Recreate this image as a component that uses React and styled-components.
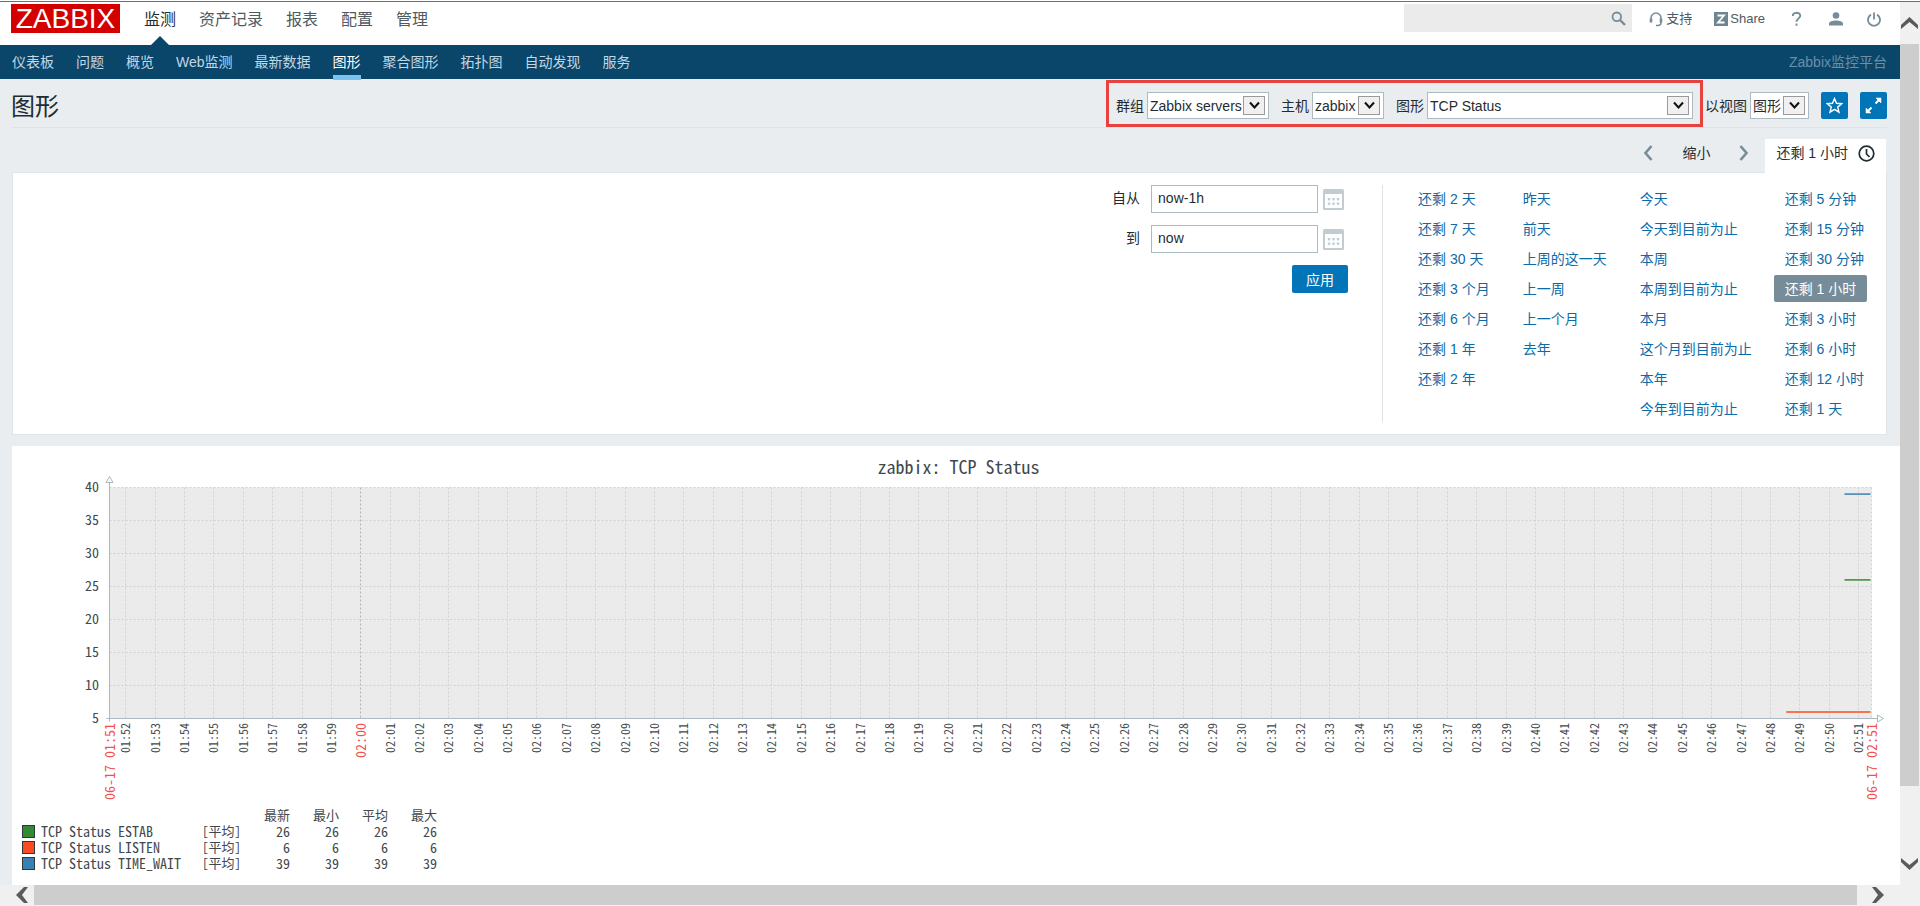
import React, { useLayoutEffect, useRef, useState } from "react";
import styled, { createGlobalStyle } from "styled-components";

const GlobalStyle = createGlobalStyle`
  * { box-sizing: border-box; }
  body {
    margin: 0;
    background: #e9edef;
    color: #1f2c33;
    font-family: "Liberation Sans", "Noto Sans CJK SC", sans-serif;
    font-size: 14px;
    line-height: 20px;
  }
  button, input, select { font: inherit; color: inherit; margin: 0; }
  a { text-decoration: none; color: inherit; }
`;

const Window = styled.div`
  display: grid;
  grid-template-columns: minmax(0, 1fr) 20px;
  grid-template-rows: minmax(0, 1fr) 21px;
  min-height: 100vh;
  border-top: 1px solid #fff;
`;

const Page = styled.div`
  display: flex;
  flex-direction: column;
  border-top: 1px solid #6b706f;
`;

const TopBar = styled.header`
  display: flex;
  align-items: flex-start;
  height: 43px;
  padding: 2px 13px 0 11px;
  background: #fff;
`;

const Logo = styled.a`
  width: 109px;
  height: 29px;
  margin-right: 24px;
  background: #d40000;
  color: #fff;
  font-size: 28px;
  line-height: 30px;
  text-align: center;
`;

const MainNav = styled.nav`
  display: flex;
  gap: 23px;
  flex: 1;
`;

const MainLink = styled.a`
  position: relative;
  height: 41px;
  font-size: 16px;
  line-height: 32px;
  color: ${(p) => (p.$active ? "#1f2c33" : "#4f5a61")};
  ${(p) =>
    p.$active &&
    `&::after {
      content: "";
      position: absolute;
      left: 50%;
      bottom: 0;
      margin-left: -9px;
      border: 9px solid transparent;
      border-top: 0;
      border-bottom-color: #0a466a;
    }`}
`;

const SearchBox = styled.form`
  display: flex;
  align-items: center;
  width: 228px;
  height: 28px;
  margin-right: 17px;
  padding-right: 6px;
  background: #ebebeb;
`;

const SearchInput = styled.input`
  flex: 1;
  min-width: 0;
  height: 28px;
  padding: 0 8px;
  border: 0;
  outline: 0;
  background: transparent;
`;

const IconButton = styled.button`
  display: flex;
  align-items: center;
  justify-content: ${(p) => p.$align || "center"};
  padding: 0;
  border: 0;
  background: none;
  color: #768d99;
`;

const Tools = styled.div`
  display: flex;
  align-items: center;
  height: 30px;
  color: #4f5a61;
  font-size: 13px;
`;

const ToolLink = styled.a`
  display: flex;
  align-items: center;
  gap: ${(p) => p.$gap || 0}px;
  margin-right: ${(p) => p.$after || 0}px;
`;

const SubBar = styled.div`
  display: flex;
  justify-content: space-between;
  height: 34px;
  padding: 0 13px 0 12px;
  background: #0a466a;
  line-height: 34px;
`;

const SubNav = styled.nav`
  display: flex;
  gap: 22px;
`;

const SubLink = styled.a`
  height: 35px;
  color: ${(p) => (p.$active ? "#fff" : "#c3d6e3")};
  border-bottom: 5px solid ${(p) => (p.$active ? "#7ac2f0" : "transparent")};
`;

const ServerName = styled.span`
  color: #6a8fa8;
`;

const TitleBar = styled.div`
  display: flex;
  align-items: center;
  justify-content: space-between;
  height: 49px;
  margin: 0 13px 0 11px;
  padding-top: 1px;
  border-bottom: 1px solid #dfe4e7;
`;

const Title = styled.h1`
  margin: 0;
  padding-top: 7px;
  font-size: 24px;
  line-height: 32px;
  font-weight: 400;
`;

const Controls = styled.div`
  display: flex;
  align-items: center;
`;

const Highlight = styled.div`
  display: flex;
  gap: 12px;
  padding: 9px 7px 5px 7px;
  border: 3px solid #e8413e;
`;

const ViewControls = styled.div`
  display: flex;
  align-items: center;
  gap: 12px;
  padding: 4px 0 0 2px;
`;

const Field = styled.label`
  display: flex;
  align-items: center;
  gap: 3px;
  white-space: nowrap;
`;

const SelectFrame = styled.span`
  position: relative;
  display: block;
  width: ${(p) => p.$width}px;
`;

const Select = styled.select`
  appearance: none;
  display: block;
  width: 100%;
  height: 27px;
  padding: 0 0 0 2px;
  border: 1px solid #acbbc2;
  border-radius: 0;
  background: #fff;
`;

const SelectArrow = styled.span`
  position: absolute;
  top: 4px;
  right: 4px;
  display: flex;
  align-items: center;
  justify-content: center;
  width: 22px;
  height: 19px;
  border: 1px solid #9a9a9a;
  background: #f0f0f0;
  pointer-events: none;
`;

const BlueSquare = styled.button`
  display: flex;
  align-items: center;
  justify-content: center;
  width: 27px;
  height: 27px;
  padding: 0;
  border: 0;
  border-radius: 2px;
  background: #0275b8;
  color: #fff;
`;

const TimeBar = styled.div`
  display: flex;
  align-items: flex-end;
  justify-content: flex-end;
  gap: 16px;
  height: 44px;
  padding-right: 14px;
`;

const TimeNav = styled.div`
  display: flex;
  align-items: center;
  gap: 29px;
  height: 38px;
`;

const PlainButton = styled.button`
  padding: 0;
  border: 0;
  background: none;
`;

const TimeTab = styled.a`
  position: relative;
  display: flex;
  align-items: center;
  gap: 10px;
  height: 34px;
  margin-bottom: -1px;
  padding: 0 11px 6px;
  background: #fff;
`;

const FilterPanel = styled.section`
  display: flex;
  justify-content: flex-end;
  margin: 0 13px 0 12px;
  padding: 12px 11px 12px 0;
  border: 1px solid #dfe4e7;
  background: #fff;
`;

const RangeForm = styled.form`
  display: grid;
  grid-template-columns: auto 167px 25px;
  grid-auto-rows: 28px;
  gap: 12px 5px;
  align-items: center;
  align-content: start;
  margin-right: 34px;
`;

const RangeLabel = styled.label`
  padding: 0 6px 2px 0;
  text-align: right;
`;

const RangeInput = styled.input`
  width: 100%;
  height: 28px;
  padding: 0 6px 2px;
  border: 1px solid #acbbc2;
  outline: 0;
`;

const ApplyButton = styled.button`
  grid-column: 2 / 4;
  justify-self: end;
  width: 56px;
  height: 28px;
  padding: 2px 0 0;
  border: 0;
  border-radius: 2px;
  background: #0275b8;
  color: #fff;
`;

const QuickRanges = styled.div`
  display: flex;
  gap: 11px;
  padding-left: 24px;
  border-left: 1px solid #dfe4e7;
`;

const RangeColumn = styled.div`
  display: flex;
  flex-direction: column;
  align-items: flex-start;
  gap: 3px;
`;

const RangeLink = styled.a`
  height: 27px;
  padding: 0 11px;
  border-radius: 2px;
  line-height: 29px;
  white-space: nowrap;
  color: ${(p) => (p.$active ? "#fff" : "#0b6aa8")};
  background: ${(p) => (p.$active ? "#768d99" : "transparent")};
`;

const GraphPanel = styled.section`
  flex: 1;
  margin: 11px 0 0 12px;
  padding-bottom: 13px;
  background: #fff;
  color: #3f484d;
  font-family: "Noto Sans Mono CJK SC", "Liberation Mono", monospace;
`;

const ChartSvg = styled.svg`
  display: block;
  width: 100%;
  height: 361px;
`;

const Legend = styled.table`
  margin-left: 10px;
  border-collapse: collapse;
  line-height: 16px;
  th, td { padding: 0; height: 16px; font-weight: 400; white-space: nowrap; }
`;

const SwatchCell = styled.td`
  width: 19px;
`;

const Swatch = styled.span`
  display: block;
  width: 13px;
  height: 13px;
  border: 1px solid #2b3a40;
  background: ${(p) => p.$color};
`;

const NameCell = styled.td`
  width: 161px;
`;

const FunctionCell = styled.td`
  width: 36px;
  font-size: 13px;
`;

const HeadCell = styled.th`
  width: 49px;
  text-align: right;
  font-size: 13px;
`;

const ValueCell = styled.td`
  text-align: right;
`;

const VerticalScroll = styled.div`
  display: flex;
  flex-direction: column;
  border-top: 1px solid #6b706f;
  background: #f0f0f0;
`;

const VerticalThumb = styled.div`
  flex: 743;
  width: 19px;
  background: #cdcdcd;
`;

const VerticalRest = styled.div`
  flex: 57;
`;

const ScrollButton = styled(IconButton)`
  width: ${(p) => p.$width}px;
  height: ${(p) => p.$height}px;
  color: #5a5a5a;
`;

const HorizontalScroll = styled.div`
  grid-column: 1 / 3;
  display: flex;
  height: 21px;
  padding: 0 30px 1px 10px;
  background: #f0f0f0;
`;

const HorizontalThumb = styled.div`
  flex: 1;
  margin-right: 9px;
  background: #cdcdcd;
`;

const mainItems = ["监测", "资产记录", "报表", "配置", "管理"];
const subItems = ["仪表板", "问题", "概览", "Web监测", "最新数据", "图形", "聚合图形", "拓扑图", "自动发现", "服务"];
const ranges = [
  ["还剩 2 天", "还剩 7 天", "还剩 30 天", "还剩 3 个月", "还剩 6 个月", "还剩 1 年", "还剩 2 年"],
  ["昨天", "前天", "上周的这一天", "上一周", "上一个月", "去年"],
  ["今天", "今天到目前为止", "本周", "本周到目前为止", "本月", "这个月到目前为止", "本年", "今年到目前为止"],
  ["还剩 5 分钟", "还剩 15 分钟", "还剩 30 分钟", "还剩 1 小时", "还剩 3 小时", "还剩 6 小时", "还剩 12 小时", "还剩 1 天"],
];
const series = [
  { name: "TCP Status ESTAB", value: 26, color: "#338a33", minutes: 0.92 },
  { name: "TCP Status LISTEN", value: 6, color: "#fc4a20", minutes: 2.9 },
  { name: "TCP Status TIME_WAIT", value: 39, color: "#3a80b2", minutes: 0.92 },
];

function SelectField({ label, value, width }) {
  return (
    <Field>
      {label}
      <SelectFrame $width={width}>
        <Select defaultValue={value}>
          <option>{value}</option>
        </Select>
        <SelectArrow>
          <svg width="11" height="9" viewBox="0 0 11 9" fill="none" stroke="#111" strokeWidth="2">
            <path d="M1 1.5 5.5 6.5 10 1.5" />
          </svg>
        </SelectArrow>
      </SelectFrame>
    </Field>
  );
}

function Chevron({ direction }) {
  const paths = {
    left: "M8.5 1 2.5 8l6 7",
    right: "M1.5 1l6 7-6 7",
  };
  return (
    <svg width="10" height="16" viewBox="0 0 10 16" fill="none" stroke="currentColor" strokeWidth="2.6">
      <path d={paths[direction]} />
    </svg>
  );
}

function ScrollChevron({ d, width, height }) {
  return (
    <svg width={width} height={height} viewBox={`0 0 ${width} ${height}`} fill="currentColor">
      <path d={d} />
    </svg>
  );
}

function CalendarIcon() {
  return (
    <svg width="21" height="21" viewBox="0 0 21 21">
      <rect width="21" height="21" rx="1.5" fill="#c3ccd1" />
      <rect x="2" y="5" width="17" height="14" fill="#fff" />
      {[9, 13.5].map((y) =>
        [4.8, 9.3, 13.8].map((x) => <rect key={`${x}-${y}`} x={x} y={y} width="2.4" height="2.4" fill="#c3ccd1" />)
      )}
    </svg>
  );
}

function Chart() {
  const ref = useRef(null);
  const [width, setWidth] = useState(1888);
  useLayoutEffect(() => {
    const update = () => setWidth(ref.current.getBoundingClientRect().width);
    update();
    const observer = new ResizeObserver(update);
    observer.observe(ref.current);
    return () => observer.disconnect();
  }, []);

  const left = 97.5;
  const top = 41.5;
  const bottom = 272.5;
  const right = width - 28.5;
  const step = (right - left) / 60;
  const yOf = (v) => bottom - ((v - 5) / 35) * (bottom - top);
  const ticks = Array.from({ length: 60 }, (_, i) => {
    const minute = 52 + i;
    const hour = minute >= 60 ? "02" : "01";
    return { label: `${hour}:${String(minute % 60).padStart(2, "0")}`, x: Math.round(left + (i + 0.54) * step) + 0.5 };
  });

  return (
    <ChartSvg ref={ref} role="img" aria-label="zabbix: TCP Status">
      <text x={(left + right) / 2 - 32} y="28" fontSize="18" textAnchor="middle" fill="#3f484d">zabbix: TCP Status</text>
      <rect x={left} y={top} width={right - left} height={bottom - top} fill="#ebebeb" />
      {[40, 35, 30, 25, 20, 15, 10, 5].map((v) => {
        const y = Math.floor(yOf(v)) + 0.5;
        return (
          <g key={v}>
            {v > 5 && <path d={`M${left} ${y}H${right}`} stroke="#cfd2d3" strokeDasharray="2 2" />}
            <text x="87" y={y + 4} fontSize="14" textAnchor="end" fill="#3f484d">{v}</text>
          </g>
        );
      })}
      {ticks.map(({ label, x }) => {
        const main = label === "02:00";
        return (
          <g key={label}>
            <path d={`M${x} ${top}V${bottom}`} stroke={main ? "#b0b3b4" : "#cfd2d3"} strokeDasharray="2 2" />
            <text
              transform={`translate(${x + (main ? 5 : 4)} 277) rotate(-90)`}
              fontSize={main ? 14 : 12}
              textAnchor="end"
              fill={main ? "#ef5350" : "#3f484d"}
            >
              {label}
            </text>
          </g>
        );
      })}
      <path d={`M${right} ${top}V${bottom}`} stroke="#cfd2d3" strokeDasharray="2 2" />
      <path d={`M${left} 36V${bottom + 3}M${left - 3} ${bottom}H${right + 6}`} stroke="#aab9c0" />
      <path d={`M${left - 3.5} 36.5h7l-3.5-6z`} fill="#fff" stroke="#aab9c0" />
      <path d={`M${right + 6} ${bottom - 3.5}v7l6-3.5z`} fill="#fff" stroke="#a5bcb5" />
      {series.map((s) => (
        <path key={s.name} d={`M${right - s.minutes * step} ${yOf(s.value)}H${right - 1}`} stroke={s.color} strokeWidth="1.5" />
      ))}
      {[["06-17 01:51", left], ["06-17 02:51", right]].map(([label, x]) => (
        <text key={label} transform={`translate(${x + 5} 277) rotate(-90)`} fontSize="14" textAnchor="end" fill="#ef5350">{label}</text>
      ))}
    </ChartSvg>
  );
}

export default function App() {
  return (
    <>
      <GlobalStyle />
      <Window>
        <Page>
          <TopBar>
            <Logo href="#">ZABBIX</Logo>
            <MainNav>
              {mainItems.map((t, i) => <MainLink key={t} href="#" $active={i === 0}>{t}</MainLink>)}
            </MainNav>
            <SearchBox>
              <SearchInput aria-label="search" />
              <IconButton type="button" aria-label="search">
                <svg width="15" height="15" viewBox="0 0 15 15" fill="none" stroke="currentColor">
                  <circle cx="5.8" cy="5.8" r="4.3" strokeWidth="1.8" />
                  <path d="m9 9 5 5" strokeWidth="2.4" />
                </svg>
              </IconButton>
            </SearchBox>
            <Tools>
              <ToolLink href="#" $gap={3} $after={22}>
                <svg width="14" height="15" viewBox="0 0 14 15" fill="none" stroke="#768d99" strokeWidth="1.5">
                  <path d="M2 8.5V6a5 5 0 0 1 10 0v4.5a3 3 0 0 1-3 3H7" />
                  <path d="M2 6.5v4M12 6.5v4" strokeWidth="2.6" />
                </svg>
                支持
              </ToolLink>
              <ToolLink href="#" $gap={2} $after={26}>
                <svg width="14" height="14" viewBox="0 0 14 14">
                  <rect width="14" height="14" fill="#6c8591" />
                  <path d="M3.5 3.5H10L4 10.5h6.5" fill="none" stroke="#fff" strokeWidth="1.8" />
                </svg>
                Share
              </ToolLink>
              <ToolLink href="#" $after={27} aria-label="help">
                <svg width="11" height="16" viewBox="0 0 11 16" fill="none" stroke="#768d99" strokeWidth="1.9">
                  <path d="M1.8 5C1.8 0.8 9.3 0.8 9.3 4.8c0 2.4-3.8 2.9-3.8 6M5.5 12.5v2.3" />
                </svg>
              </ToolLink>
              <ToolLink href="#" $after={24} aria-label="user">
                <svg width="14" height="14" viewBox="0 0 14 14" fill="#768d99">
                  <circle cx="7" cy="3.5" r="3.3" />
                  <path d="M0 13.5v-2C0 9.5 3.5 8.5 7 8.5s7 1 7 3v2z" />
                </svg>
              </ToolLink>
              <ToolLink href="#" $after={6} aria-label="logout">
                <svg width="14" height="15" viewBox="0 0 14 15" fill="none" stroke="#768d99" strokeWidth="1.8">
                  <path d="M4 2.6a6 6 0 1 0 6 0M7 0.5v7" />
                </svg>
              </ToolLink>
            </Tools>
          </TopBar>
          <SubBar>
            <SubNav>
              {subItems.map((t) => <SubLink key={t} href="#" $active={t === "图形"}>{t}</SubLink>)}
            </SubNav>
            <ServerName>Zabbix监控平台</ServerName>
          </SubBar>
          <TitleBar>
            <Title>图形</Title>
            <Controls>
              <Highlight>
                <SelectField label="群组" value="Zabbix servers" width={122} />
                <SelectField label="主机" value="zabbix" width={72} />
                <SelectField label="图形" value="TCP Status" width={266} />
              </Highlight>
              <ViewControls>
                <SelectField label="以视图" value="图形" width={59} />
                <BlueSquare aria-label="favourite">
                  <svg width="17" height="17" viewBox="0 0 17 17" fill="none" stroke="currentColor" strokeWidth="1.4">
                    <path d="m8.5 1.5 2 4.8 5.2.4-4 3.4 1.3 5.1-4.5-2.8L4 15.2l1.3-5.1-4-3.4 5.2-.4z" />
                  </svg>
                </BlueSquare>
                <BlueSquare aria-label="fullscreen">
                  <svg width="17" height="17" viewBox="0 0 17 17" fill="currentColor" stroke="currentColor">
                    <path d="M11 1h5v5zM1 11v5h5z" strokeWidth=".5" />
                    <path d="m14 3-3.5 3.5M3 14l3.5-3.5" strokeWidth="2" />
                  </svg>
                </BlueSquare>
              </ViewControls>
            </Controls>
          </TitleBar>
          <TimeBar>
            <TimeNav>
              <IconButton aria-label="previous"><Chevron direction="left" /></IconButton>
              <PlainButton>缩小</PlainButton>
              <IconButton aria-label="next"><Chevron direction="right" /></IconButton>
            </TimeNav>
            <TimeTab href="#">
              还剩 1 小时
              <svg width="17" height="17" viewBox="0 0 17 17" fill="none" stroke="#1f2c33" strokeWidth="1.7">
                <circle cx="8.5" cy="8.5" r="7.3" />
                <path d="M8.5 4v5l3 3" />
              </svg>
            </TimeTab>
          </TimeBar>
          <FilterPanel>
            <RangeForm>
              <RangeLabel htmlFor="from">自从</RangeLabel>
              <RangeInput id="from" defaultValue="now-1h" />
              <IconButton type="button" $align="flex-start" aria-label="from calendar"><CalendarIcon /></IconButton>
              <RangeLabel htmlFor="to">到</RangeLabel>
              <RangeInput id="to" defaultValue="now" />
              <IconButton type="button" $align="flex-start" aria-label="to calendar"><CalendarIcon /></IconButton>
              <ApplyButton type="button">应用</ApplyButton>
            </RangeForm>
            <QuickRanges>
              {ranges.map((column) => (
                <RangeColumn key={column[0]}>
                  {column.map((t) => <RangeLink key={t} href="#" $active={t === "还剩 1 小时"}>{t}</RangeLink>)}
                </RangeColumn>
              ))}
            </QuickRanges>
          </FilterPanel>
          <GraphPanel>
            <Chart />
            <Legend>
              <thead>
                <tr>
                  <td colSpan={3} />
                  {["最新", "最小", "平均", "最大"].map((t) => <HeadCell key={t}>{t}</HeadCell>)}
                </tr>
              </thead>
              <tbody>
                {series.map((s) => (
                  <tr key={s.name}>
                    <SwatchCell><Swatch $color={s.color} /></SwatchCell>
                    <NameCell>{s.name}</NameCell>
                    <FunctionCell>[平均]</FunctionCell>
                    {[0, 1, 2, 3].map((i) => <ValueCell key={i}>{s.value}</ValueCell>)}
                  </tr>
                ))}
              </tbody>
            </Legend>
          </GraphPanel>
        </Page>
        <VerticalScroll>
          <ScrollButton $width={19} $height={42} aria-label="scroll up">
            <ScrollChevron width={17} height={12} d="M8.5 0 17 8v4L8.5 5 0 12V8z" />
          </ScrollButton>
          <VerticalThumb />
          <VerticalRest />
          <ScrollButton $width={19} $height={42} aria-label="scroll down">
            <ScrollChevron width={17} height={12} d="M8.5 12 0 4V0l8.5 7L17 0v4z" />
          </ScrollButton>
        </VerticalScroll>
        <HorizontalScroll>
          <ScrollButton $width={24} $height={20} aria-label="scroll left">
            <ScrollChevron width={12} height={16} d="M0 8 8 0h4L6 8l6 8H8z" />
          </ScrollButton>
          <HorizontalThumb />
          <ScrollButton $width={24} $height={20} aria-label="scroll right">
            <ScrollChevron width={12} height={16} d="M12 8 4 0H0l6 8-6 8h4z" />
          </ScrollButton>
        </HorizontalScroll>
      </Window>
    </>
  );
}
